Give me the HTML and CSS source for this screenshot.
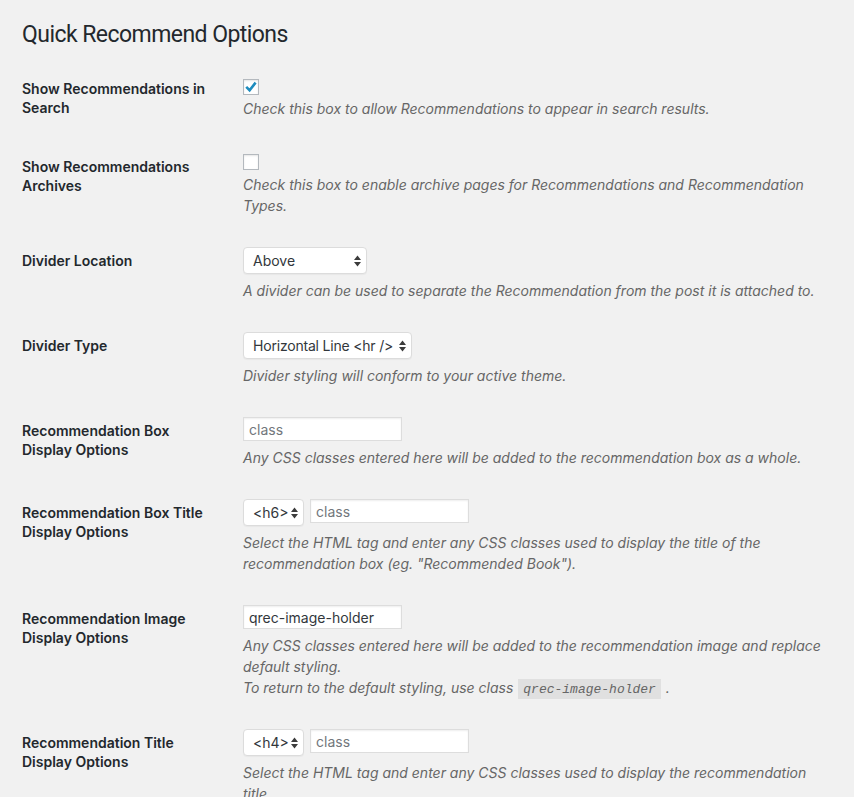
FILE: index.html
```html
<!DOCTYPE html>
<html lang="en">
<head>
<meta charset="utf-8">
<title>Quick Recommend Options</title>
<link rel="stylesheet" href="styles.css">
</head>
<body>
<div class="wrap">
  <h1 class="title">Quick Recommend Options</h1>
  <div class="form">
    <div class="field field-first">
      <div class="label">Show Recommendations in Search</div>
      <div class="control">
        <span class="checkbox cb-first"><svg width="16" height="16" viewBox="0 0 16 16"><path d="M3.2 7.9 L6.6 11.2 L12.6 3.6" fill="none" stroke="#1e8cbe" stroke-width="2.6" stroke-linecap="butt" stroke-linejoin="miter"/></svg></span>
        <p class="desc desc-first">Check this box to allow Recommendations to appear in search results.</p>
      </div>
    </div>
    <div class="field">
      <div class="label">Show Recommendations Archives</div>
      <div class="control">
        <span class="checkbox cb-second"></span>
        <p class="desc desc-second">Check this box to enable archive pages for Recommendations and Recommendation Types.</p>
      </div>
    </div>
    <div class="field">
      <div class="label">Divider Location</div>
      <div class="control">
        <div class="inputs">
          <span class="select select-location">Above<svg class="arrows" width="7" height="12" viewBox="0 0 7 12"><path d="M0 5 L3.5 0.5 L7 5 Z M0 7 L3.5 11.5 L7 7 Z" fill="#3c3c3c"/></svg></span>
        </div>
        <p class="desc">A divider can be used to separate the Recommendation from the post it is attached to.</p>
      </div>
    </div>
    <div class="field">
      <div class="label">Divider Type</div>
      <div class="control">
        <div class="inputs">
          <span class="select select-type"><span class="select-text">Horizontal Line &lt;hr /&gt;</span><svg class="arrows" width="7" height="12" viewBox="0 0 7 12"><path d="M0 5 L3.5 0.5 L7 5 Z M0 7 L3.5 11.5 L7 7 Z" fill="#3c3c3c"/></svg></span>
        </div>
        <p class="desc">Divider styling will conform to your active theme.</p>
      </div>
    </div>
    <div class="field">
      <div class="label">Recommendation Box Display Options</div>
      <div class="control">
        <div class="inputs">
          <input class="text" type="text" placeholder="class">
        </div>
        <p class="desc">Any CSS classes entered here will be added to the recommendation box as a whole.</p>
      </div>
    </div>
    <div class="field">
      <div class="label">Recommendation Box Title Display Options</div>
      <div class="control">
        <div class="inputs">
          <span class="select select-tag">&lt;h6&gt;<svg class="arrows" width="7" height="12" viewBox="0 0 7 12"><path d="M0 5 L3.5 0.5 L7 5 Z M0 7 L3.5 11.5 L7 7 Z" fill="#3c3c3c"/></svg></span>
          <input class="text" type="text" placeholder="class">
        </div>
        <p class="desc">Select the HTML tag and enter any CSS classes used to display the title of the recommendation box (eg. "Recommended Book").</p>
      </div>
    </div>
    <div class="field">
      <div class="label">Recommendation Image Display Options</div>
      <div class="control">
        <div class="inputs">
          <input class="text" type="text" value="qrec-image-holder">
        </div>
        <p class="desc">Any CSS classes entered here will be added to the recommendation image and replace default styling.<br>To return to the default styling, use class <code>qrec-image-holder</code> .</p>
      </div>
    </div>
    <div class="field">
      <div class="label">Recommendation Title Display Options</div>
      <div class="control">
        <div class="inputs">
          <span class="select select-tag">&lt;h4&gt;<svg class="arrows" width="7" height="12" viewBox="0 0 7 12"><path d="M0 5 L3.5 0.5 L7 5 Z M0 7 L3.5 11.5 L7 7 Z" fill="#3c3c3c"/></svg></span>
          <input class="text" type="text" placeholder="class">
        </div>
        <p class="desc">Select the HTML tag and enter any CSS classes used to display the recommendation title.</p>
      </div>
    </div>
  </div>
</div>
</body>
</html>
```

FILE: styles.css
```css
html, body {
  margin: 0;
  padding: 0;
  background: #f1f1f1;
}

body {
  font-family: Inter, "Noto Sans", "Liberation Sans", sans-serif;
  color: #23282d;
  font-size: 14px;
}

.wrap {
  padding: 20px 14px 0 22px;
}

.title {
  margin: 0;
  font-family: Roboto, "Liberation Sans", sans-serif;
  font-size: 23px;
  font-weight: 400;
  line-height: 29px;
  letter-spacing: -0.55px;
  color: #23282d;
}

.form {
  margin-top: 10px;
}

.field {
  display: grid;
  grid-template-columns: 211px 1fr;
}

.label {
  padding: 20px 16px 20px 0;
  font-size: 14px;
  font-weight: 600;
  line-height: 19px;
  color: #23282d;
}

.control {
  padding: 16px 10px 15px 10px;
  min-width: 0;
}

.checkbox {
  display: block;
  box-sizing: border-box;
  width: 16px;
  height: 16px;
  border: 1px solid #b4b9be;
  background: #fff;
  box-shadow: inset 0 1px 2px rgba(0, 0, 0, 0.1);
  position: relative;
}

.checkbox svg {
  position: absolute;
  left: -1px;
  top: -1px;
}

.cb-first {
  margin-top: 4px;
}

.cb-second {
  margin-top: 1px;
}

.desc {
  margin: 6px 0 0;
  font-size: 14px;
  line-height: 21px;
  font-style: italic;
  color: #666;
}

.desc-first {
  margin-top: 3px;
}

.desc-second {
  margin-top: 4px;
}

.inputs {
  display: flex;
  align-items: flex-start;
  gap: 6px;
}

.select {
  box-sizing: border-box;
  height: 27px;
  display: inline-flex;
  align-items: center;
  justify-content: space-between;
  padding: 0 5px 0 9px;
  background: #fff;
  border: 1px solid #dcdcdc;
  border-radius: 4px;
  box-shadow: 0 1px 1px rgba(0, 0, 0, 0.04);
  font-size: 14px;
  color: #32373c;
  white-space: nowrap;
}

.select-text {
  letter-spacing: -0.2px;
}

.arrows {
  flex: none;
}

.select-location {
  width: 124px;
}

.select-type {
  width: 169px;
}

.select-tag {
  width: 61px;
}

.text {
  box-sizing: border-box;
  width: 159px;
  height: 24px;
  margin: 0;
  padding: 0 5px;
  border: 1px solid #ddd;
  border-radius: 0;
  background: #fff;
  box-shadow: inset 0 1px 2px rgba(0, 0, 0, 0.07);
  font-family: Inter, "Noto Sans", "Liberation Sans", sans-serif;
  font-size: 14px;
  color: #32373c;
  outline: none;
}

.text::placeholder {
  color: #72777c;
  opacity: 1;
}

code {
  font-family: "Liberation Mono", "DejaVu Sans Mono", monospace;
  font-size: 13px;
  line-height: 1;
  font-style: italic;
  padding: 3px 5px 2px;
  margin: 0 1px;
  background: rgba(0, 0, 0, 0.07);
  color: #666;
}
```
